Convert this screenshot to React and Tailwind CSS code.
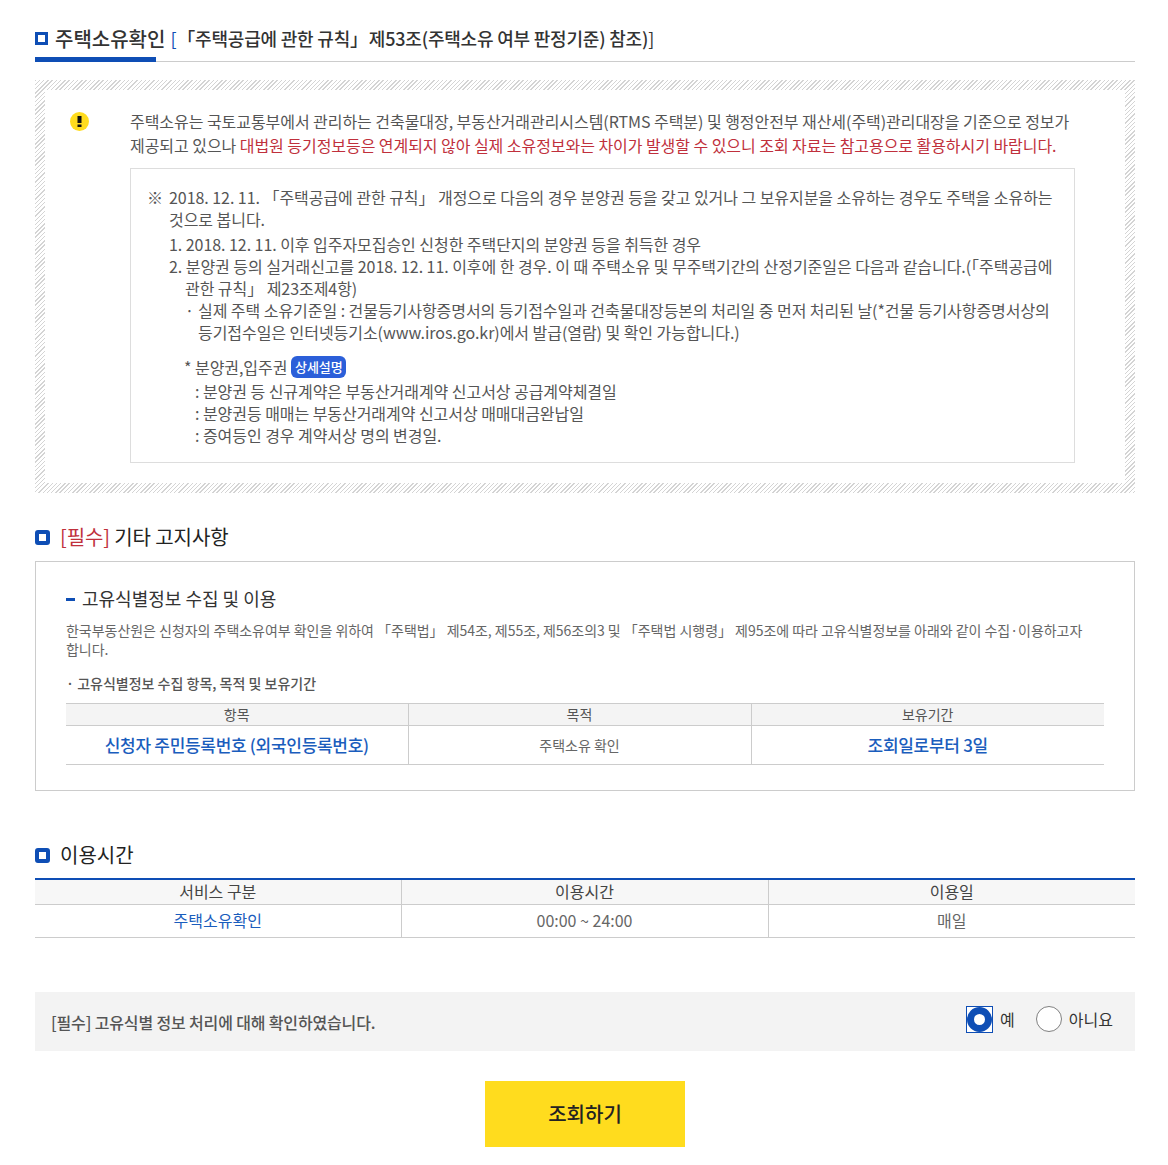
function Square({ round }) {
  return <span className={round ? 'inline-block w-[15px] h-[15px] border-[4px] rounded-[3px] border-[#0e4eb5] bg-white shrink-0' : 'inline-block w-[13px] h-[13px] border-[3px] border-[#0e4eb5] bg-white shrink-0'} />;
}

export default function App() {
  return (
    <div className='w-[1168px] h-[1165px] bg-white pl-[35px] pr-[33px] pt-[20px] [font-family:"Noto_Sans_CJK_KR","Noto_Sans",sans-serif] text-[#555] overflow-hidden'>
      {/* Title */}
      <div className="relative h-[42px] border-b border-[#ccc] flex items-center whitespace-nowrap pb-[4px]">
        <Square />
        <span className="ml-[7px] text-[20px] font-medium text-[#333]">주택소유확인</span>
        <span className="ml-[5px] text-[18px] font-medium tracking-[-0.2px] text-[#333]"><span className="text-[#0e4eb5] font-normal">[</span><span className="ml-[10px]">「주택공급에 관한 규칙」</span><span className="ml-[1px]">제53조(주택소유 여부 판정기준) 참조)</span><span className="font-normal">]</span></span>
        <span className="absolute left-0 bottom-[-1px] w-[121px] h-[5px] bg-[#0e4eb5]" />
      </div>

      {/* Hatched notice */}
      <div className="mt-[18px] h-[413px] p-[10px] bg-[repeating-linear-gradient(135deg,#d4d4d4_0px,#d4d4d4_1px,#ffffff_1px,#ffffff_3px)]">
        <div className="h-full bg-white flex pl-[25px] pr-[50px] pt-[19px]">
          <div className="w-[60px] shrink-0 pt-[3px]">
            <svg width="19" height="19" viewBox="0 0 19 19">
              <circle cx="9.5" cy="9.5" r="9.5" fill="#ffdc1e" />
              <rect x="7.5" y="4" width="4" height="7" fill="#111" />
              <rect x="7.5" y="12.5" width="4" height="2.5" fill="#111" />
            </svg>
          </div>
          <div className="flex-1 text-[16px] tracking-[-0.05px]">
            <p className="leading-[24px] whitespace-nowrap">
              주택소유는 국토교통부에서 관리하는 건축물대장, 부동산거래관리시스템(RTMS 주택분) 및 행정안전부 재산세(주택)관리대장을 기준으로 정보가<br />
              제공되고 있으나 <span className="text-[#c0303c]">대법원 등기정보등은 연계되지 않아 실제 소유정보와는 차이가 발생할 수 있으니 조회 자료는 참고용으로 활용하시기 바랍니다.</span>
            </p>
            <div className="mt-[11px] h-[295px] w-[945px] border border-[#ddd] pt-[17px] pl-[16px] leading-[22px] whitespace-nowrap">
              <div className="flex">
                <span className="w-[22px] shrink-0">※</span>
                <span>2018. 12. 11. 「주택공급에 관한 규칙」 개정으로 다음의 경우 분양권 등을 갖고 있거나 그 보유지분을 소유하는 경우도 주택을 소유하는<br />것으로 봅니다.</span>
              </div>
              <div className="mt-[3px] pl-[22px]">
                <p>1. 2018. 12. 11. 이후 입주자모집승인 신청한 주택단지의 분양권 등을 취득한 경우</p>
                <p className="pl-[16px] -indent-[16px]">2. 분양권 등의 실거래신고를 2018. 12. 11. 이후에 한 경우. 이 때 주택소유 및 무주택기간의 산정기준일은 다음과 같습니다.(「주택공급에<br />관한 규칙」 제23조제4항)</p>
                <div className="flex pl-[16px]">
                  <span className="w-[13px] shrink-0">·</span>
                  <span>실제 주택 소유기준일 : 건물등기사항증명서의 등기접수일과 건축물대장등본의 처리일 중 먼저 처리된 날(*건물 등기사항증명서상의<br />등기접수일은 인터넷등기소(www.iros.go.kr)에서 발급(열람) 및 확인 가능합니다.)</span>
                </div>
                <div className="mt-[12px] pl-[15px] flex items-center h-[23px]">
                  <span>* 분양권,입주권</span>
                  <span className="ml-[4px] inline-flex items-center justify-center w-[55px] h-[22px] rounded-[6px] bg-[#2b5fd9] text-white text-[13px] font-medium tracking-normal">상세설명</span>
                </div>
                <div className="mt-[2px] pl-[26px]">
                  <p>: 분양권 등 신규계약은 부동산거래계약 신고서상 공급계약체결일</p>
                  <p>: 분양권등 매매는 부동산거래계약 신고서상 매매대금완납일</p>
                  <p>: 증여등인 경우 계약서상 명의 변경일.</p>
                </div>
              </div>
            </div>
          </div>
        </div>
      </div>

      {/* Required */}
      <div className="mt-[27px] flex items-center h-[34px]">
        <Square round />
        <span className="ml-[10px] text-[20px] tracking-[-0.1px] text-[#222]"><span className="text-[#c0303c]">[필수]</span> 기타 고지사항</span>
      </div>
      <div className="mt-[7px] h-[230px] border border-[#ccc] pt-[24px] px-[30px]">
        <div className="flex items-center h-[24px]">
          <span className="w-[9px] h-[3px] bg-[#0e4eb5] mt-[2px]" />
          <span className="ml-[7px] text-[18px] text-[#333]">고유식별정보 수집 및 이용</span>
        </div>
        <p className="mt-[11px] text-[14px] leading-[19px] tracking-[-0.03px] text-[#666] whitespace-nowrap">한국부동산원은 신청자의 주택소유여부 확인을 위하여 「주택법」 제54조, 제55조, 제56조의3 및 「주택법 시행령」 제95조에 따라 고유식별정보를 아래와 같이 수집·이용하고자<br />합니다.</p>
        <p className="mt-[15px] text-[14px] leading-[19px] font-medium text-[#555]">· 고유식별정보 수집 항목, 목적 및 보유기간</p>
        <table className="mt-[10px] w-[1038px] table-fixed border-collapse">
          <thead>
            <tr className="h-[22px] bg-[#f4f4f4] border-y border-[#ccc] text-[14px] text-[#555]">
              <th className="font-normal w-[342px] border-r border-[#ccc]">항목</th>
              <th className="font-normal w-[343px] border-r border-[#ccc]">목적</th>
              <th className="font-normal">보유기간</th>
            </tr>
          </thead>
          <tbody>
            <tr className="h-[39px] border-b border-[#ccc]">
              <td className="text-center border-r border-[#ccc] text-[17px] font-medium tracking-[-0.3px] text-[#1a5dbd]">신청자 주민등록번호 (외국인등록번호)</td>
              <td className="text-center border-r border-[#ccc] text-[14px] text-[#666]">주택소유 확인</td>
              <td className="text-center text-[17px] font-medium tracking-[-0.3px] text-[#1a5dbd]">조회일로부터 3일</td>
            </tr>
          </tbody>
        </table>
      </div>

      {/* Usage time */}
      <div className="mt-[47px] flex items-center h-[34px]">
        <Square round />
        <span className="ml-[10px] text-[20px] text-[#222]">이용시간</span>
      </div>
      <table className="mt-[6px] w-[1100px] table-fixed border-collapse">
        <thead>
          <tr className="h-[25px] bg-[#f7f7f7] border-t-2 border-t-[#0e4eb5] border-b border-b-[#ccc] text-[16px] leading-[20px] text-[#444]">
            <th className="font-normal w-[366px] border-r border-[#ccc] pb-[2px]">서비스 구분</th>
            <th className="font-normal w-[367px] border-r border-[#ccc] pb-[2px]">이용시간</th>
            <th className="font-normal pb-[2px]">이용일</th>
          </tr>
        </thead>
        <tbody>
          <tr className="h-[33px] border-b border-[#ccc] text-[16px] leading-[20px]">
            <td className="text-center border-r border-[#ccc] text-[#1a5dbd] pb-[2px]">주택소유확인</td>
            <td className="text-center border-r border-[#ccc] text-[#666] pb-[2px]">00:00 ~ 24:00</td>
            <td className="text-center text-[#666] pb-[2px]">매일</td>
          </tr>
        </tbody>
      </table>

      {/* Agreement */}
      <div className="mt-[54px] h-[59px] bg-[#f3f3f3] flex items-center pl-[16px] pr-[22px]">
        <span className="text-[16px] font-medium tracking-[-0.15px] text-[#555] pt-[1px]">[필수] 고유식별 정보 처리에 대해 확인하였습니다.</span>
        <div className="ml-auto flex items-center text-[16px] text-[#333] -mt-[4px]">
          <span className="flex items-center justify-center w-[27px] h-[27px] border border-[#0e4eb5] bg-white">
            <span className="block w-[25px] h-[25px] rounded-full border-[7px] border-[#0e4eb5] bg-white" />
          </span>
          <span className="ml-[7px]">예</span>
          <span className="ml-[21px] w-[26px] h-[26px] rounded-full border border-[#808080] bg-white" />
          <span className="ml-[7px]">아니요</span>
        </div>
      </div>

      {/* Button */}
      <div className="mt-[30px] flex justify-center">
        <button className="w-[200px] h-[66px] bg-[#ffdc1e] text-[20px] font-medium text-[#222]">조회하기</button>
      </div>
    </div>
  );
}
